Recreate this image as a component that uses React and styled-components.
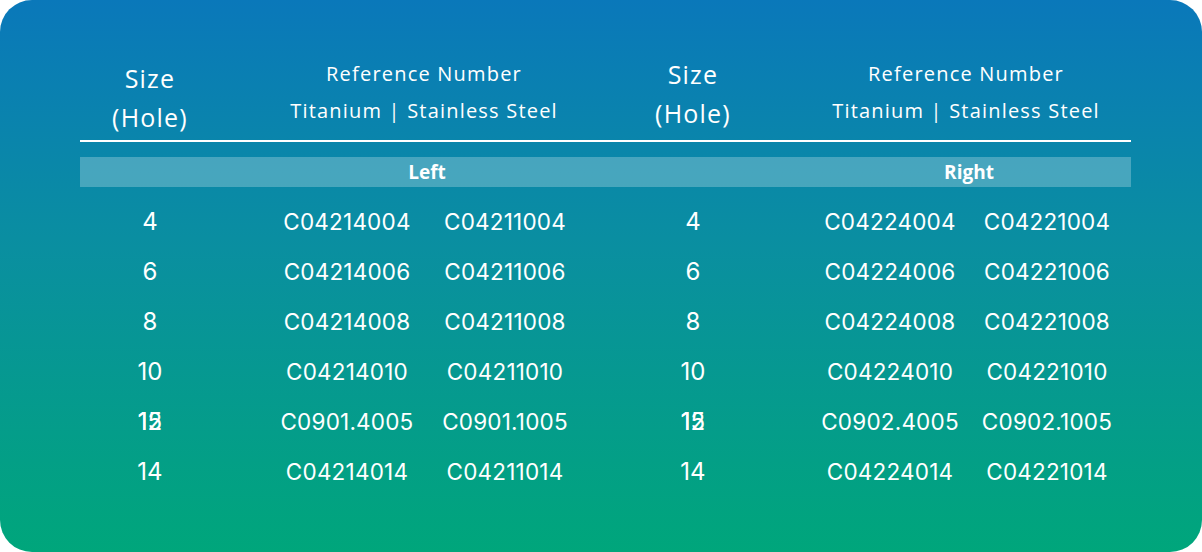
import React from "react";
import styled, { createGlobalStyle } from "styled-components";

const GlobalStyle = createGlobalStyle`
  html, body {
    margin: 0;
    padding: 0;
    background: #ffffff;
  }
`;

const COLUMNS = "140px 54px 146px 170px 33px 140px 54px 146px 168px";

const Card = styled.div`
  width: 1202px;
  height: 552px;
  box-sizing: border-box;
  border-radius: 32px;
  background: linear-gradient(180deg, #0a78ba 0%, #0a8fa0 45%, #00a67b 100%);
  padding: 50px 71px 0 80px;
  color: #ffffff;
`;

const Table = styled.div`
  width: 1051px;
`;

const HeadRow = styled.div`
  display: grid;
  grid-template-columns: ${COLUMNS};
  height: 90px;
  border-bottom: 2px solid #ffffff;
`;

const SizeHead = styled.div`
  grid-column: ${(p) => p.$col};
  align-self: end;
  padding-bottom: ${(p) => p.$lift}px;
  text-align: center;
  font-family: "Open Sans", sans-serif;
  font-size: 25px;
  line-height: 39px;
  letter-spacing: 1.2px;
`;

const RefHead = styled.div`
  grid-column: ${(p) => p.$span};
  align-self: end;
  padding: 0 16px 11px 0;
  text-align: center;
  font-family: "Open Sans", sans-serif;
  font-size: 20px;
  line-height: 37px;
  letter-spacing: 1.2px;
  white-space: nowrap;
`;

const Band = styled.div`
  display: grid;
  grid-template-columns: ${COLUMNS};
  height: 30px;
  margin-top: 15px;
  margin-bottom: 10px;
  background: rgba(255, 255, 255, 0.25);
`;

const BandLabel = styled.div`
  grid-column: ${(p) => p.$span};
  padding-right: 10px;
  text-align: center;
  font-family: "Open Sans", sans-serif;
  font-weight: 700;
  font-size: 19px;
  line-height: 30px;
`;

const Row = styled.div`
  display: grid;
  grid-template-columns: ${COLUMNS};
  height: 50px;
  align-items: center;
`;

const SizeCell = styled.div`
  grid-column: ${(p) => p.$col};
  text-align: center;
  font-family: "Inter", sans-serif;
  font-size: 24px;
  line-height: 50px;
`;

const Code = styled.div`
  grid-column: ${(p) => p.$col};
  text-align: center;
  font-family: "Inter", sans-serif;
  font-size: 22.5px;
  line-height: 50px;
  letter-spacing: 0.2px;
  white-space: nowrap;
`;

const Overlap = styled.span`
  position: relative;
  display: inline-block;
`;

const OverlapTop = styled.span`
  position: absolute;
  left: 0;
  top: 0;
`;

const rows = [
  { size: "4", left: ["C04214004", "C04211004"], right: ["C04224004", "C04221004"] },
  { size: "6", left: ["C04214006", "C04211006"], right: ["C04224006", "C04221006"] },
  { size: "8", left: ["C04214008", "C04211008"], right: ["C04224008", "C04221008"] },
  { size: "10", left: ["C04214010", "C04211010"], right: ["C04224010", "C04221010"] },
  { size: "12/15", left: ["C0901.4005", "C0901.1005"], right: ["C0902.4005", "C0902.1005"] },
  { size: "14", left: ["C04214014", "C04211014"], right: ["C04224014", "C04221014"] },
];

const SizeValue = ({ value }) => {
  if (value !== "12/15") return value;
  // the source has both labels printed on top of each other
  return (
    <Overlap>
      12
      <OverlapTop>15</OverlapTop>
    </Overlap>
  );
};

export default function App() {
  return (
    <>
      <GlobalStyle />
      <Card>
        <Table>
          <HeadRow>
            <SizeHead $col="1" $lift={3}>
              Size
              <br />
              (Hole)
            </SizeHead>
            <RefHead $span="3 / 5">
              Reference Number
              <br />
              Titanium | Stainless Steel
            </RefHead>
            <SizeHead $col="6" $lift={7}>
              Size
              <br />
              (Hole)
            </SizeHead>
            <RefHead $span="8 / 10">
              Reference Number
              <br />
              Titanium | Stainless Steel
            </RefHead>
          </HeadRow>

          <Band>
            <BandLabel $span="3 / 5">Left</BandLabel>
            <BandLabel $span="8 / 10">Right</BandLabel>
          </Band>

          {rows.map((r) => (
            <Row key={r.size}>
              <SizeCell $col="1">
                <SizeValue value={r.size} />
              </SizeCell>
              <Code $col="3">{r.left[0]}</Code>
              <Code $col="4">{r.left[1]}</Code>
              <SizeCell $col="6">
                <SizeValue value={r.size} />
              </SizeCell>
              <Code $col="8">{r.right[0]}</Code>
              <Code $col="9">{r.right[1]}</Code>
            </Row>
          ))}
        </Table>
      </Card>
    </>
  );
}
